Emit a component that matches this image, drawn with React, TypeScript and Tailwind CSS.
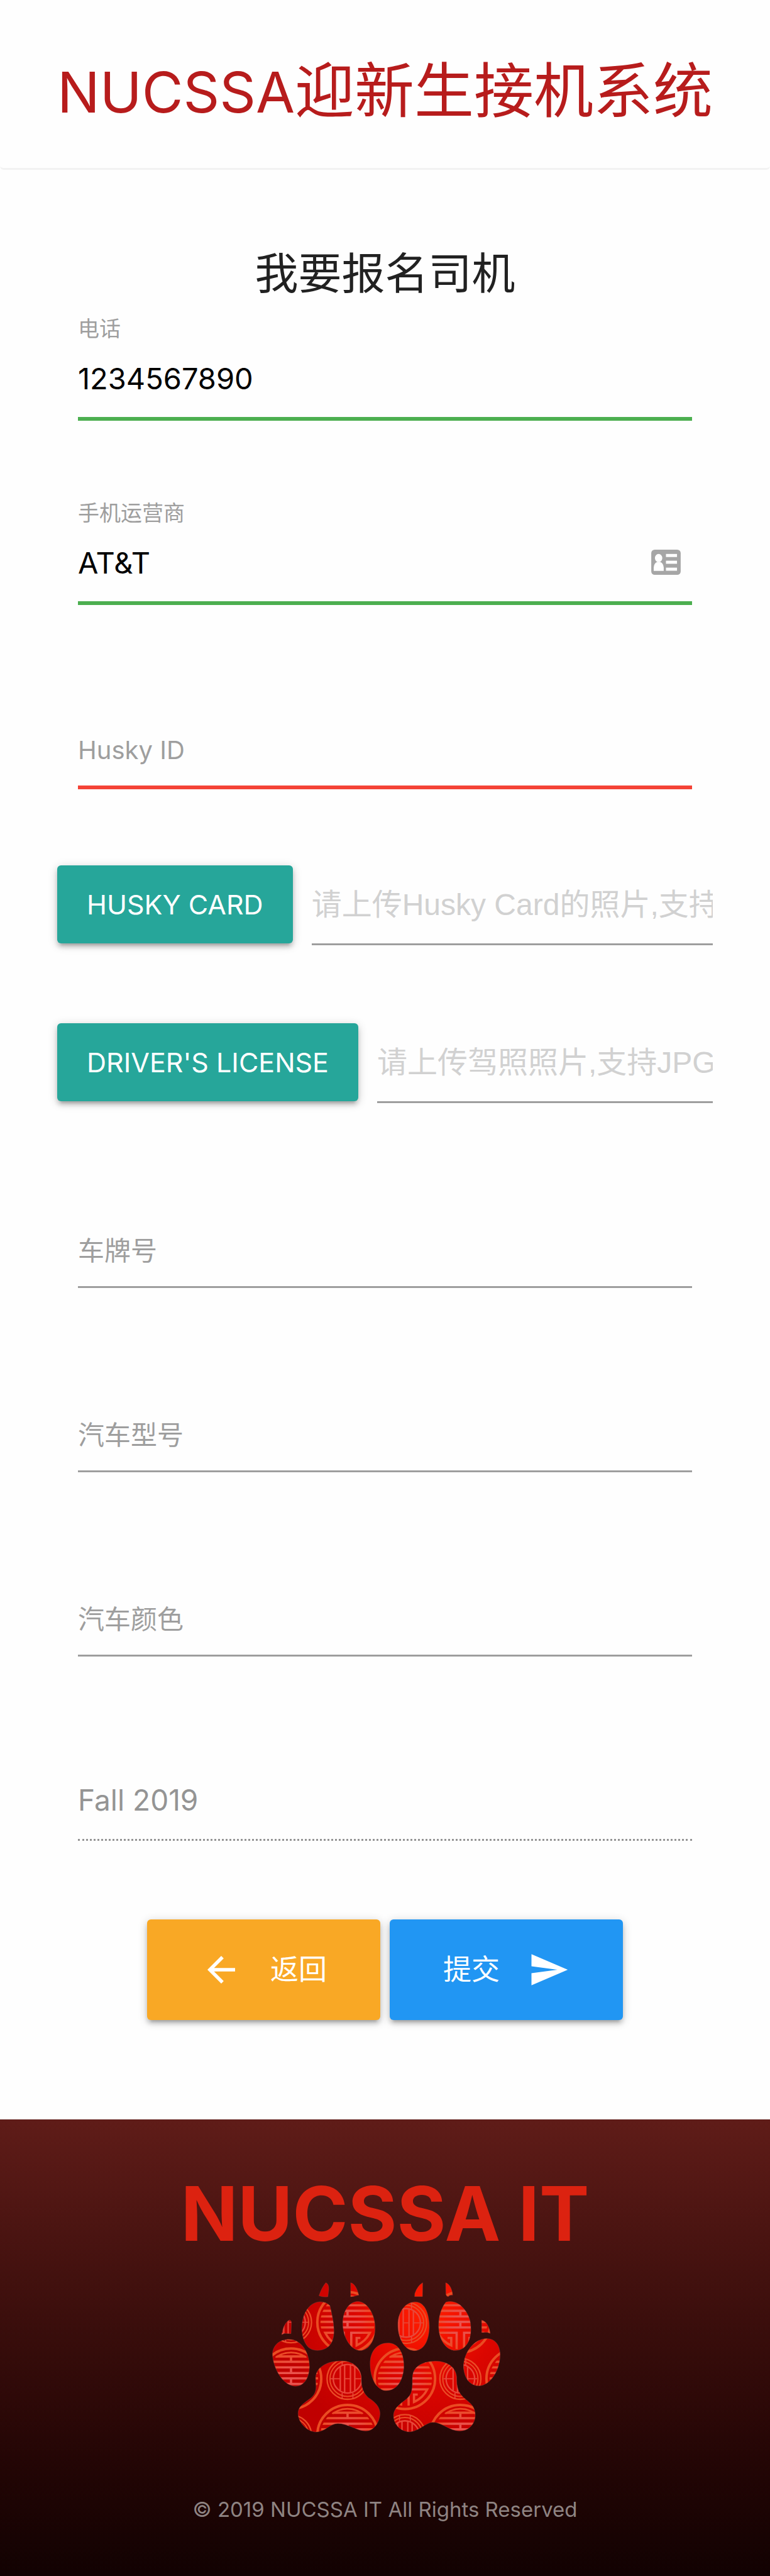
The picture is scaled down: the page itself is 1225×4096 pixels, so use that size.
import type { ReactNode } from "react";
import { MdArrowBack, MdSend } from "react-icons/md";

const raised =
  "shadow-[0_6px_6px_0_rgba(0,0,0,0.14),0_9px_3px_-6px_rgba(0,0,0,0.12),0_3px_15px_0_rgba(0,0,0,0.2)]";

const fontStack = "font-['Inter','Noto_Sans_CJK_SC',sans-serif]";

type FilledFieldProps = {
  id: string;
  label: string;
  value: string;
  adornment?: ReactNode;
};

/** Validated field: small label above, green rule below. */
function FilledField({ id, label, value, adornment }: FilledFieldProps) {
  return (
    <div className="mx-[33px]">
      <label htmlFor={id} className="block h-[35px] text-[34px] leading-[37px] text-[#9e9e9e]">
        {label}
      </label>
      <div className="flex h-[130px] items-center border-b-6 border-[#4caf50]">
        <input
          id={id}
          defaultValue={value}
          className="h-[124px] min-w-0 flex-1 bg-transparent text-[47px] text-black outline-none"
        />
        {adornment}
      </div>
    </div>
  );
}

type EmptyFieldProps = { id: string; label: string; invalid?: boolean };

/** Empty field: the label rests inside the input until it gets a value. */
function EmptyField({ id, label, invalid = false }: EmptyFieldProps) {
  return (
    <div className="mx-[33px] grid">
      <label
        htmlFor={id}
        className={
          invalid
            ? "col-start-1 row-start-1 h-[124px] pt-3 text-[40px] leading-[112px] text-[#9e9e9e]"
            : "col-start-1 row-start-1 h-[124px] pt-3 text-[42px] leading-[112px] text-[#9e9e9e]"
        }
      >
        {label}
      </label>
      <input
        id={id}
        className={
          invalid
            ? "col-start-1 row-start-1 h-[130px] w-full border-b-6 border-[#f44336] bg-transparent text-[47px] outline-none"
            : "col-start-1 row-start-1 h-[127px] w-full border-b-3 border-[#9e9e9e] bg-transparent text-[47px] outline-none"
        }
      />
    </div>
  );
}

type UploadRowProps = { button: string; placeholder: string };

function UploadRow({ button, placeholder }: UploadRowProps) {
  return (
    <div className="flex gap-[30px]">
      <button
        type="button"
        className={`h-[124px] shrink-0 rounded-[6px] bg-[#26a69a] px-[47px] text-[43px] whitespace-nowrap text-white uppercase ${raised}`}
      >
        {button}
      </button>
      <input
        type="text"
        aria-label={button}
        placeholder={placeholder}
        className="h-[127px] min-w-0 flex-1 border-b-3 border-[#9e9e9e] bg-transparent font-['Liberation_Sans','Noto_Sans_CJK_SC',sans-serif] text-[48px] outline-none placeholder:text-[#d1d1d1]"
      />
    </div>
  );
}

function ContactCardIcon() {
  return (
    <svg viewBox="0 0 144 123" className="mr-[18px] h-[40px] w-[47px]" aria-hidden="true">
      <rect width="144" height="123" rx="17" fill="#a6a6a6" />
      <g fill="#fff">
        <ellipse cx="36" cy="41" rx="18" ry="20" />
        <path d="M12 104V88Q13 66 29 60H43Q60 66 61 88V104Z" />
        <rect x="72" y="21" width="54" height="15" />
        <rect x="72" y="54" width="54" height="15" />
        <rect x="72" y="88" width="54" height="15" />
      </g>
    </svg>
  );
}

const pawShapes = [
  "M285 147Q298 108 318 84Q334 90 332 120L328 152Q300 154 285 147Z",
  "M438 84Q464 90 477 144Q458 150 438 152Z",
  "M748 136Q760 100 786 84L785 151L747 151Z",
  "M897 84Q925 95 931 144Q915 142 910 151Q900 150 898 138Z",
  "M105 335L110 312Q120 275 142 264Q154 265 152 285L150 330L117 329Z",
  "M1071 264Q1105 275 1112 329L1100 324L1071 324Z",
  "M290 176Q320 176 338 195Q345 225 352 262C360 310 362 360 335 388C310 415 255 420 230 392C195 350 198 280 214 238C230 200 255 178 290 176Z",
  "M470 175C515 172 556 235 556 300C556 365 525 411 485 411C440 411 400 350 400 280C400 220 430 178 470 175Z",
  "M750 177C800 177 818 240 818 300C815 370 790 412 745 412C700 412 666 355 666 285C668 220 705 177 750 177Z",
  "M898 178C955 162 1000 215 1014 265C1030 340 1005 411 945 411C895 411 863 355 863 290C863 240 880 200 898 178Z",
  "M140 358C205 358 240 430 239 490C237 550 210 584 170 584C110 580 65 500 60 430C62 385 95 358 140 358Z",
  "M1095 354C1145 354 1165 400 1159 450C1150 525 1105 582 1055 582C1005 580 980 530 984 475C992 410 1040 354 1095 354Z",
  "M620 375C665 375 695 420 695 485C693 560 660 605 608 605C560 602 532 540 532 475C532 415 565 375 620 375Z",
  "M375 463C440 455 488 490 490 545C488 590 500 618 525 640C555 660 578 680 580 715C578 760 550 800 510 800C470 800 420 762 375 764C335 766 315 805 268 805C225 800 185 760 184 715C185 675 225 660 252 635C280 605 268 580 269 540C272 495 320 465 375 463Z",
  "M840 463C905 460 948 495 950 540C950 590 955 610 985 640C1015 665 1040 680 1040 725C1038 775 1000 800 965 800C915 800 880 758 835 758C800 760 770 800 725 804C680 804 645 770 645 722C650 675 700 660 722 630C745 600 730 550 740 520C750 485 790 465 840 463Z",
];

const largeMedallions = [
  [423, 275],
  [968, 275],
  [150, 548],
  [700, 548],
  [1240, 548],
  [423, 820],
  [968, 820],
];

const smallMedallions = [
  [150, 275],
  [706, 278],
  [423, 548],
  [968, 548],
  [150, 822],
  [700, 820],
];

function PawLogo() {
  return (
    <svg
      viewBox="50 70 1120 750"
      className="h-[247px] w-[369px]"
      role="img"
      aria-label="Husky paws"
    >
      <defs>
        <clipPath id="paws">
          {pawShapes.map((d) => (
            <path key={d} d={d} />
          ))}
        </clipPath>
        <clipPath id="disc">
          <circle r="131" />
        </clipPath>
        <radialGradient id="red" gradientUnits="userSpaceOnUse" cx="800" cy="230" r="680">
          <stop offset="0" stopColor="#ff2000" />
          <stop offset="0.2" stopColor="#f61400" />
          <stop offset="0.5" stopColor="#dc0600" />
          <stop offset="1" stopColor="#c00000" />
        </radialGradient>
        <radialGradient id="thread" gradientUnits="userSpaceOnUse" cx="0" cy="0" r="135">
          <stop offset="0" stopColor="#ea5450" />
          <stop offset="0.45" stopColor="#e95048" />
          <stop offset="1" stopColor="#ec4a22" />
        </radialGradient>
        <g id="large" fill="none" stroke="url(#thread)" strokeWidth="11">
          <circle r="146" stroke="#ea4c22" strokeWidth="12" />
          <g clipPath="url(#disc)">
            <path d="M-73 -106A129 129 0 0 1 73 -106" strokeWidth="12" />
            <path d="M-76 -108H76M-104 -82H104M-140 -55H140M-140 -28H140M-140 -2H140M-140 25H140" />
            <path d="M0 -108V-82M0 -55V-28M0 -2V25" />
            <path d="M-18 140V51H-108Q-88 92 -44 112V76H-62" />
            <path d="M18 140V51H108Q88 92 44 112V76H62" />
          </g>
        </g>
        <g id="small" fill="none" stroke="#ea4c26" strokeWidth="7">
          <circle r="99" />
          <circle r="85" strokeWidth="6" />
          <g stroke="#e8483a">
            <circle r="69" />
            <path d="M-35 -58V58M-14 -66V66M14 -66V66M35 -58V58" />
            <path d="M-82 0H-35M-14 0H14M35 0H82" strokeWidth="5" />
            <path d="M-26 -97V-68M26 -97V-68M-26 97V68M26 97V68" strokeWidth="5" />
          </g>
        </g>
      </defs>
      <g clipPath="url(#paws)">
        <rect x="50" y="70" width="1120" height="750" fill="url(#red)" />
        {largeMedallions.map(([x, y]) => (
          <use key={`${x}-${y}`} href="#large" x={x} y={y} />
        ))}
        {smallMedallions.map(([x, y]) => (
          <use key={`${x}-${y}`} href="#small" x={x} y={y} />
        ))}
      </g>
      <g fill="none" stroke="#8a4a40" strokeOpacity="0.6" strokeWidth="2">
        {pawShapes.map((d) => (
          <path key={d} d={d} />
        ))}
      </g>
    </svg>
  );
}

export default function App() {
  return (
    <div className={`bg-[#fefefe] ${fontStack}`}>
      <header className="rounded-b-[6px] border-b-3 border-[#f2f2f2] pt-[75px] pb-[52px]">
        <h1 className="text-center text-[95px] leading-[140px] whitespace-nowrap text-[#b71c1c]">
          <span className="text-[90px] leading-none">NUCSSA</span>迎新生接机系统
        </h1>
      </header>

      <main className="px-[91px] pt-[125px] pb-[158px]">
        <h2 className="text-center text-[69px] leading-[80px] text-[#212121]">我要报名司机</h2>

        <form className="mt-[29px]" onSubmit={(e) => e.preventDefault()}>
          <div className="flex flex-col gap-32">
            <FilledField id="phone" label="电话" value="1234567890" />
            <FilledField
              id="carrier"
              label="手机运营商"
              value="AT&T"
              adornment={<ContactCardIcon />}
            />
          </div>

          <div className="mt-[163px]">
            <EmptyField id="husky-id" label="Husky ID" invalid />
          </div>

          <div className="mt-[121px] flex flex-col gap-[124px]">
            <UploadRow
              button="Husky Card"
              placeholder="请上传Husky Card的照片,支持JPG, PNG格式"
            />
            <UploadRow
              button="Driver's License"
              placeholder="请上传驾照照片,支持JPG, PNG格式"
            />
          </div>

          <div className="mt-[167px] flex flex-col gap-[166px]">
            <EmptyField id="plate" label="车牌号" />
            <EmptyField id="model" label="汽车型号" />
            <EmptyField id="color" label="汽车颜色" />
            <div className="mx-[33px]">
              <input
                disabled
                aria-label="学期"
                defaultValue="Fall 2019"
                className="h-[127px] w-full border-b-3 border-dotted border-[#949494] bg-transparent text-[46px] text-[#949494]"
              />
            </div>
          </div>

          <div className="mt-[125px] flex justify-center gap-[15px]">
            <button
              type="button"
              className={`flex h-[160px] items-center gap-[45px] rounded-[6px] bg-[#f9a825] px-[85px] text-[45px] text-white ${raised}`}
            >
              <MdArrowBack className="size-[66px]" aria-hidden="true" />
              返回
            </button>
            <button
              type="submit"
              className={`flex h-[160px] items-center gap-[45px] rounded-[6px] bg-[#2196f3] px-[85px] text-[45px] text-white ${raised}`}
            >
              提交
              <MdSend className="size-[66px]" aria-hidden="true" />
            </button>
          </div>
        </form>
      </main>

      <footer className="flex flex-col items-center bg-linear-to-b from-[#5f1c18] to-[#120202] pt-[80px] pb-[82px]">
        <h3 className="text-[119px] leading-[140px] font-bold whitespace-nowrap text-[#dc2210]">NUCSSA IT</h3>
        <div className="mt-[35px] pl-1">
          <PawLogo />
        </div>
        <p className="mt-[94px] text-[33px] leading-[48px] text-[#8e8382]">
          © 2019 NUCSSA IT All Rights Reserved
        </p>
      </footer>
    </div>
  );
}
